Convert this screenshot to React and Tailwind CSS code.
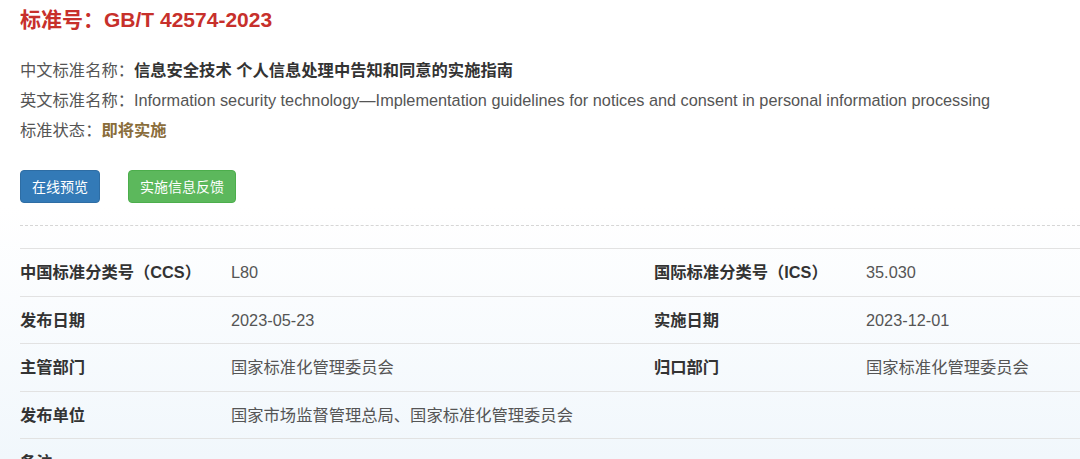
export default function App() {
  const font = { fontFamily: '"Liberation Sans", Arial, "Noto Sans CJK SC", sans-serif' };
  const rows = [
    ["中国标准分类号（CCS）", "L80", "国际标准分类号（ICS）", "35.030"],
    ["发布日期", "2023-05-23", "实施日期", "2023-12-01"],
    ["主管部门", "国家标准化管理委员会", "归口部门", "国家标准化管理委员会"],
    ["发布单位", "国家市场监督管理总局、国家标准化管理委员会", "", ""],
    ["备注", "", "", ""],
  ];
  return (
    <div
      className="w-[1080px] h-[459px] overflow-hidden bg-[linear-gradient(to_bottom,#ffffff_45%,#f1f7fc_100%)]"
      style={font}
    >
      <div className="pl-5 pt-[6px]">
        <h1 className="text-[21px] leading-7 font-bold text-[#c7302b]">标准号：GB/T 42574-2023</h1>
        <div className="mt-[21px] text-[16.3px] leading-[30px] text-[#555]">
          <div>
            中文标准名称：<span className="font-bold text-[#333]">信息安全技术 个人信息处理中告知和同意的实施指南</span>
          </div>
          <div>
            英文标准名称：<span>Information security technology—Implementation guidelines for notices and consent in personal information processing</span>
          </div>
          <div>
            标准状态：<span className="font-bold text-[#8a6d3b]">即将实施</span>
          </div>
        </div>
        <div className="mt-[25px] flex gap-[28px]">
          <button className="h-[33px] px-[11px] rounded-[4px] bg-[#337ab7] border border-[#2e6da4] text-white text-[14px] leading-5">
            在线预览
          </button>
          <button className="h-[33px] px-[11px] rounded-[4px] bg-[#5cb85c] border border-[#4cae4c] text-white text-[14px] leading-5">
            实施信息反馈
          </button>
        </div>
        <div className="mt-[22px] border-t border-dashed border-[#d6d6d6]" />
        <div className="mt-[22px]">
          {rows.map((r, i) => (
            <div
              key={i}
              className="grid grid-cols-[211px_423px_212px_1fr] h-[47.5px] items-center border-t border-[#e2e2e2] text-[16.3px]"
            >
              <div className="font-bold text-[#333]">{r[0]}</div>
              <div className="text-[#555]">{r[1]}</div>
              <div className="font-bold text-[#333]">{r[2]}</div>
              <div className="text-[#555]">{r[3]}</div>
            </div>
          ))}
        </div>
      </div>
    </div>
  );
}
